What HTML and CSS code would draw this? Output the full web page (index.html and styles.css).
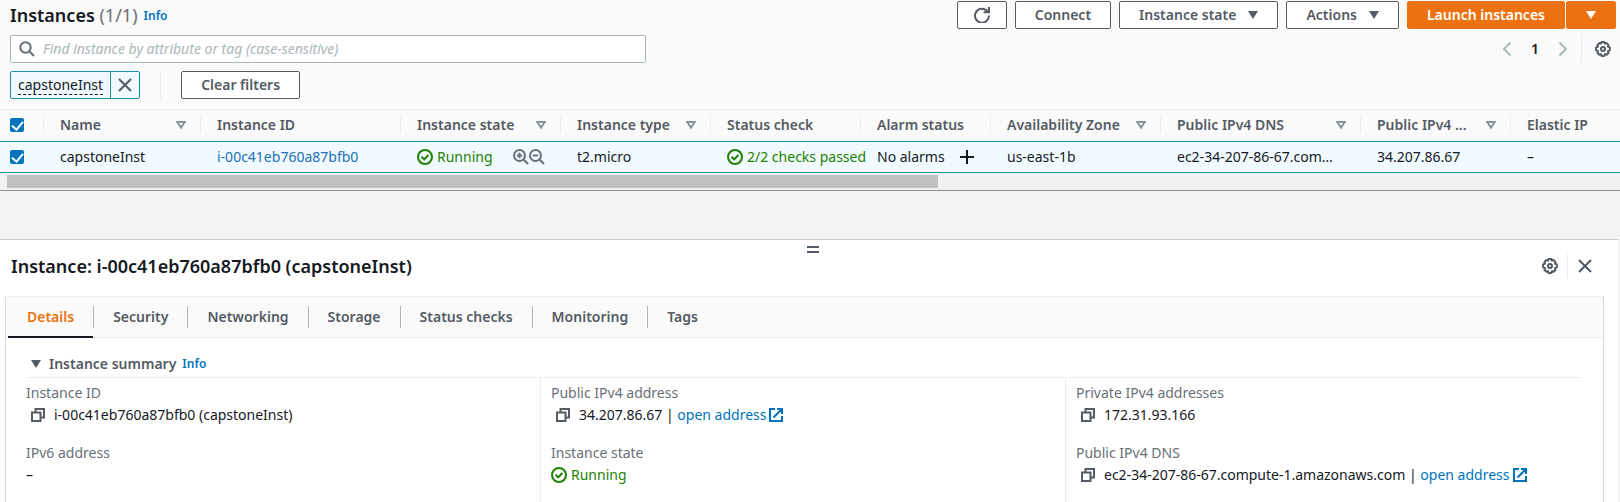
FILE: index.html
```html
<!DOCTYPE html>
<html lang="en">
<head>
<meta charset="utf-8">
<meta name="viewport" content="width=device-width, initial-scale=1">
<title>Instances</title>
<link rel="stylesheet" href="styles.css">
</head>
<body>
<svg class="sprite" aria-hidden="true">
  <symbol id="i-sort" viewBox="0 0 10 8"><path d="M1.2 1h7.6L5 6.6z" fill="none" stroke="currentColor" stroke-width="2"/></symbol>
  <symbol id="i-caret" viewBox="0 0 10 8"><path d="M0 0h10L5 8z" fill="currentColor"/></symbol>
  <symbol id="i-close" viewBox="0 0 16 16"><path d="M2 2l12 12M14 2L2 14" fill="none" stroke="currentColor" stroke-width="2"/></symbol>
  <symbol id="i-ok" viewBox="0 0 16 16"><g fill="none" stroke="currentColor" stroke-width="2"><circle cx="8" cy="8" r="7"/><path d="M4.6 7.8l2.6 2.6 4.2-4.4"/></g></symbol>
  <symbol id="i-gear" viewBox="0 0 16 16"><g fill="none" stroke="currentColor" stroke-width="2"><path stroke-linejoin="round" d="M6.600 1h2.800l.5 1.600 1.600-.6 2.100 2.100-.7 1.500 1.900.8v3l-1.900.7.7 1.600-2 2-1.600-.6-.6 1.900H6.600L6 13.100l-1.600.6-2-2 .7-1.600L1.100 9.400v-3L3.100 5.600l-.7-1.500 2-2.100 1.700.6z"/><circle cx="8" cy="8" r="2"/></g></symbol>
  <symbol id="i-copy" viewBox="0 0 14 14"><path d="M1 4.500h8.500V13H1zM4.500 4.500V1H13v8.500H9.500" fill="none" stroke="currentColor" stroke-width="2"/></symbol>
  <symbol id="i-ext" viewBox="0 0 14 14"><path d="M6 1H1v12h12V8M8 1h5v5M13 1L4.500 9.500" fill="none" stroke="currentColor" stroke-width="2"/></symbol>
  <symbol id="i-zoomin" viewBox="0 0 16 16"><path d="M10.800 10.800L15 15M6.500 3.800v5.400M3.800 6.500h5.400" fill="none" stroke="currentColor" stroke-width="2"/><circle cx="6.500" cy="6.500" r="5.500" fill="none" stroke="currentColor" stroke-width="2"/></symbol>
  <symbol id="i-zoomout" viewBox="0 0 16 16"><path d="M10.800 10.800L15 15M3.800 6.500h5.400" fill="none" stroke="currentColor" stroke-width="2"/><circle cx="6.500" cy="6.500" r="5.500" fill="none" stroke="currentColor" stroke-width="2"/></symbol>
</svg>

<main class="list">
  <header class="bar">
    <h1 class="title">Instances <span class="count">(1/1)</span></h1>
    <a class="info" href="#">Info</a>
    <div class="actions">
      <button class="btn btn-icon" aria-label="Refresh"><svg class="ic16" viewBox="0 0 16 16"><path d="M13.800 4.800A7 7 0 1 0 15 8.500M15 0v5.200H9.600" fill="none" stroke="currentColor" stroke-width="2"/></svg></button>
      <button class="btn">Connect</button>
      <button class="btn">Instance state <svg class="caret"><use href="#i-caret"/></svg></button>
      <button class="btn">Actions <svg class="caret"><use href="#i-caret"/></svg></button>
      <div class="split">
        <button class="btn primary">Launch instances</button>
        <button class="btn primary btn-icon" aria-label="More launch options"><svg class="caret"><use href="#i-caret"/></svg></button>
      </div>
    </div>
  </header>

  <div class="bar">
    <label class="search">
      <svg class="ic16" viewBox="0 0 16 16"><circle cx="6.500" cy="6.500" r="5.200" fill="none" stroke="currentColor" stroke-width="2"/><path d="M10.300 10.300L15 15" stroke="currentColor" stroke-width="2"/></svg>
      <input type="text" aria-label="Find instance" placeholder="Find instance by attribute or tag (case-sensitive)">
    </label>
    <nav class="pager" aria-label="Pages">
      <button class="plain page-arrow" aria-label="Previous page"><svg class="chev" viewBox="0 0 10 16"><path d="M8.500 1.500L2 8l6.500 6.500" fill="none" stroke="currentColor" stroke-width="2"/></svg></button>
      <button class="plain page">1</button>
      <button class="plain page-arrow" aria-label="Next page"><svg class="chev" viewBox="0 0 10 16"><path d="M1.500 1.500L8 8l-6.500 6.500" fill="none" stroke="currentColor" stroke-width="2"/></svg></button>
      <span class="rule"></span>
      <button class="plain" aria-label="Preferences"><svg class="ic16"><use href="#i-gear"/></svg></button>
    </nav>
  </div>

  <div class="bar filters">
    <div class="token"><button class="plain token-name"><span>capstoneInst</span></button><button class="plain token-x" aria-label="Remove filter"><svg class="ic16"><use href="#i-close"/></svg></button></div>
    <span class="rule"></span>
    <button class="btn">Clear filters</button>
  </div>

  <div class="table-wrap">
    <table class="grid">
      <colgroup><col class="c-check"><col class="c-name"><col class="c-200"><col class="c-160"><col class="c-150"><col class="c-150"><col class="c-130"><col class="c-170"><col class="c-200"><col class="c-150"><col></colgroup>
      <thead>
        <tr>
          <th><div class="th check"><input type="checkbox" checked aria-label="Select all"></div></th>
          <th><div class="th"><span>Name</span><svg class="sort"><use href="#i-sort"/></svg></div></th>
          <th><div class="th"><span>Instance ID</span></div></th>
          <th><div class="th"><span>Instance state</span><svg class="sort"><use href="#i-sort"/></svg></div></th>
          <th><div class="th"><span>Instance type</span><svg class="sort"><use href="#i-sort"/></svg></div></th>
          <th><div class="th"><span>Status check</span></div></th>
          <th><div class="th"><span>Alarm status</span></div></th>
          <th><div class="th"><span>Availability Zone</span><svg class="sort"><use href="#i-sort"/></svg></div></th>
          <th><div class="th"><span>Public IPv4 DNS</span><svg class="sort"><use href="#i-sort"/></svg></div></th>
          <th><div class="th"><span>Public IPv4 ...</span><svg class="sort"><use href="#i-sort"/></svg></div></th>
          <th><div class="th last"><span>Elastic IP</span></div></th>
        </tr>
      </thead>
      <tbody>
        <tr>
          <td><div class="td check"><input type="checkbox" checked aria-label="Select capstoneInst"></div></td>
          <td><div class="td">capstoneInst</div></td>
          <td><div class="td"><a class="id" href="#">i-00c41eb760a87bfb0</a></div></td>
          <td><div class="td"><span class="ok"><svg class="ic16"><use href="#i-ok"/></svg>Running</span><span class="zooms"><button class="plain" aria-label="Filter in"><svg class="ic16"><use href="#i-zoomin"/></svg></button><button class="plain" aria-label="Filter out"><svg class="ic16"><use href="#i-zoomout"/></svg></button></span></div></td>
          <td><div class="td">t2.micro</div></td>
          <td><div class="td"><span class="ok"><svg class="ic16"><use href="#i-ok"/></svg>2/2 checks passed</span></div></td>
          <td><div class="td">No alarms<button class="plain add" aria-label="Add alarm"><svg class="ic16" viewBox="0 0 16 16"><path d="M8 1v14M1 8h14" stroke="currentColor" stroke-width="2"/></svg></button></div></td>
          <td><div class="td">us-east-1b</div></td>
          <td><div class="td">ec2-34-207-86-67.com…</div></td>
          <td><div class="td">34.207.86.67</div></td>
          <td><div class="td">–</div></td>
        </tr>
      </tbody>
    </table>
  </div>
  <div class="scroll"><div class="thumb"></div></div>
</main>

<section class="panel">
  <div class="handle"><span></span></div>
  <header class="panel-head">
    <h2 class="panel-title">Instance: i-00c41eb760a87bfb0 (capstoneInst)</h2>
    <button class="plain" aria-label="Panel preferences"><svg class="ic16"><use href="#i-gear"/></svg></button>
    <span class="rule"></span>
    <button class="plain" aria-label="Close panel"><svg class="ic16"><use href="#i-close"/></svg></button>
  </header>
  <div class="card">
    <nav class="tabs">
      <button class="tab active">Details</button>
      <button class="tab">Security</button>
      <button class="tab">Networking</button>
      <button class="tab">Storage</button>
      <button class="tab">Status checks</button>
      <button class="tab">Monitoring</button>
      <button class="tab">Tags</button>
    </nav>
    <div class="summary">
      <div class="summary-head"><svg class="caret"><use href="#i-caret"/></svg><h3>Instance summary</h3><a class="info" href="#">Info</a></div>
      <div class="cols">
        <dl>
          <dt>Instance ID</dt>
          <dd><button class="plain copy" aria-label="Copy"><svg class="ic14"><use href="#i-copy"/></svg></button>i-00c41eb760a87bfb0 (capstoneInst)</dd>
          <dt>IPv6 address</dt>
          <dd>–</dd>
        </dl>
        <dl>
          <dt>Public IPv4 address</dt>
          <dd><button class="plain copy" aria-label="Copy"><svg class="ic14"><use href="#i-copy"/></svg></button>34.207.86.67 |&nbsp;<a href="#">open address<svg class="ic14"><use href="#i-ext"/></svg></a></dd>
          <dt>Instance state</dt>
          <dd><span class="ok"><svg class="ic16"><use href="#i-ok"/></svg>Running</span></dd>
        </dl>
        <dl>
          <dt>Private IPv4 addresses</dt>
          <dd><button class="plain copy" aria-label="Copy"><svg class="ic14"><use href="#i-copy"/></svg></button>172.31.93.166</dd>
          <dt>Public IPv4 DNS</dt>
          <dd><button class="plain copy" aria-label="Copy"><svg class="ic14"><use href="#i-copy"/></svg></button>ec2-34-207-86-67.compute-1.amazonaws.com |&nbsp;<a href="#">open address<svg class="ic14"><use href="#i-ext"/></svg></a></dd>
        </dl>
      </div>
    </div>
  </div>
</section>
</body>
</html>
```
FILE: styles.css
```css
* { box-sizing: border-box; }

body {
  margin: 0;
  min-height: 100vh;
  display: flex;
  flex-direction: column;
  background: #f2f3f3;
  color: #16191f;
  font: 14px/20px "Noto Sans", sans-serif;
}

.sprite { display: none; }
svg { display: block; flex: none; }
.ic16 { width: 16px; height: 16px; }
.ic14 { width: 14px; height: 14px; }
.caret { width: 10px; height: 8px; }
.sort { width: 10px; height: 8px; color: #879596; margin-left: auto; }
.chev { width: 10px; height: 16px; }
a { color: #0073bb; text-decoration: none; }
button { font: inherit; cursor: pointer; }
h1, h2, h3, dl, dd { margin: 0; }

.plain {
  display: flex;
  align-items: center;
  justify-content: center;
  padding: 0;
  border: 0;
  background: none;
  color: #545b64;
}

.rule { width: 1px; height: 28px; background: #eaeded; }
.info { font-size: 12px; font-weight: 600; }
.ok { display: flex; align-items: center; gap: 4px; color: #1d8102; white-space: nowrap; }

/* Instance list */
.list { background: #fafafa; border-bottom: 1px solid #879596; }
.bar { display: flex; align-items: center; padding: 0 4px 6px 10px; }
header.bar { padding-top: 1px; }
.title { font-size: 18px; font-weight: 600; }
.count { font-weight: 400; color: #687078; }
.bar .info { margin: 2px 0 0 6px; }
.actions { display: flex; gap: 8px; margin-left: auto; }
.split { display: flex; gap: 1px; }

.btn {
  display: flex;
  align-items: center;
  justify-content: center;
  gap: 12px;
  height: 28px;
  padding: 0 19px;
  border: 1px solid #545b64;
  border-radius: 2px;
  background: #fff;
  color: #545b64;
  font-weight: 600;
  white-space: nowrap;
}
.btn-icon { width: 50px; padding: 0; }
.primary { border-color: #ec7211; background: #ec7211; color: #fff; }

.search {
  display: flex;
  align-items: center;
  gap: 8px;
  width: 636px;
  height: 28px;
  padding: 0 8px;
  border: 1px solid #aab7b8;
  border-radius: 2px;
  background: #fff;
  color: #687078;
}
.search input {
  flex: 1;
  min-width: 0;
  padding: 0;
  border: 0;
  outline: 0;
  background: none;
  font: inherit;
}
.search input::placeholder { color: #aab7b8; font-style: italic; }

.pager { display: flex; align-items: center; margin-left: auto; padding-right: 5px; }
.page-arrow { color: #aab7b8; width: 10px; }
.page { width: 46px; color: #16191f; font-weight: 600; }
.pager .rule { margin: 0 13px; }

.filters { gap: 20px; padding-top: 2px; padding-bottom: 10px; }
.token {
  display: flex;
  height: 28px;
  border: 1px solid #1f8fa3;
  border-radius: 2px;
  background: #f1faff;
}
.token-name { padding: 0 7px; color: #16191f; }
.token-name span { line-height: 18px; border-bottom: 1px dashed #16191f; }
.token-x { width: 29px; border-left: 1px solid #1f8fa3; }

.table-wrap { overflow: hidden; border-top: 1px solid #eaeded; }
.grid { width: 100%; table-layout: fixed; border-collapse: collapse; }
.c-check { width: 44px; }
.c-name { width: 157px; }
.c-130 { width: 130px; }
.c-150 { width: 150px; }
.c-160 { width: 160px; }
.c-170 { width: 170px; }
.c-200 { width: 200px; }
.grid th, .grid td { padding: 0; text-align: left; white-space: nowrap; }
.grid th { height: 31px; color: #545b64; font-weight: 600; }
.th {
  display: flex;
  align-items: center;
  height: 16px;
  padding: 0 14px 0 16px;
  border-right: 1px solid #eaeded;
}
.th.last { border-right: 0; }
.grid td { height: 31px; background: #f1faff; border: solid #1f8fa3; border-width: 1px 0; }
.td { display: flex; align-items: center; padding: 0 16px; }
.check { padding: 0 10px; }
.id { color: #2270b5; }
.zooms { display: flex; margin-left: auto; }
.zooms .plain { color: #687078; }
.add { margin-left: auto; color: #16191f; }

input[type="checkbox"] {
  appearance: none;
  display: flex;
  justify-content: center;
  width: 14px;
  height: 14px;
  margin: 0;
  border-radius: 2px;
  background: #0073bb;
}
input[type="checkbox"]::before {
  content: "";
  width: 5px;
  height: 9px;
  margin-top: 1px;
  border: solid #fff;
  border-width: 0 2px 2px 0;
  transform: rotate(40deg);
}

.scroll { height: 17px; padding: 2px 7px; background: #f1f1f1; }
.thumb { width: 58%; height: 13px; background: #c1c1c1; }

/* Details panel */
.panel {
  flex: 1;
  display: flex;
  flex-direction: column;
  margin: 48px 2px 0 0;
  padding: 0 14px 0 5px;
  border-top: 1px solid #c8cccc;
  background: #fff;
}
.handle { display: flex; justify-content: center; padding: 6px 0 0 16px; }
.handle span { width: 12px; height: 7px; border: solid #545b64; border-width: 2px 0; }
.panel-head { display: flex; align-items: center; padding: 1px 11px 17px 6px; }
.panel-title { margin-right: auto; font-size: 18px; line-height: 25px; font-weight: 600; }
.panel-head .rule { height: 24px; margin: 0 9px; }

.card {
  flex: 1;
  display: flex;
  flex-direction: column;
  border: 1px solid #d5dbdb;
  border-top-color: #eaeded;
  border-bottom: 0;
}
.tabs {
  display: flex;
  align-items: center;
  height: 41px;
  padding-left: 2px;
  background: #fafafa;
  border-bottom: 1px solid #eaeded;
}
.tab {
  height: 22px;
  padding: 0 19px;
  border: 0;
  border-right: 1px solid #aab7b8;
  background: none;
  color: #545b64;
  font-weight: 600;
}
.tab:last-child { border-right: 0; }
.tab.active { position: relative; color: #ec7211; }
.tab.active::after {
  content: "";
  position: absolute;
  left: 0;
  right: 0;
  bottom: -10px;
  height: 2px;
  background: #16191f;
}

.summary { flex: 1; display: flex; flex-direction: column; padding: 16px 12px 0 10px; }
.summary-head {
  display: flex;
  align-items: center;
  margin: 0 10px;
  padding: 0 5px 3px;
  border-bottom: 1px solid #eaeded;
  color: #545b64;
}
.summary-head h3 { margin: 0 6px 0 8px; font-size: 14px; line-height: 20px; font-weight: 600; }
.cols { flex: 1; display: grid; grid-template-columns: repeat(3, 1fr); }
.cols dl { padding: 4px 10px 0; border-right: 1px solid #eaeded; }
.cols dl:last-child { border-right: 0; }
.cols dt { line-height: 22px; color: #687078; }
.cols dd { display: flex; align-items: center; height: 22px; margin-bottom: 16px; }
.cols dd:last-child { margin-bottom: 0; }
.cols dd a { display: flex; align-items: center; gap: 3px; }
.copy { margin: 0 9px 0 5px; }
```
